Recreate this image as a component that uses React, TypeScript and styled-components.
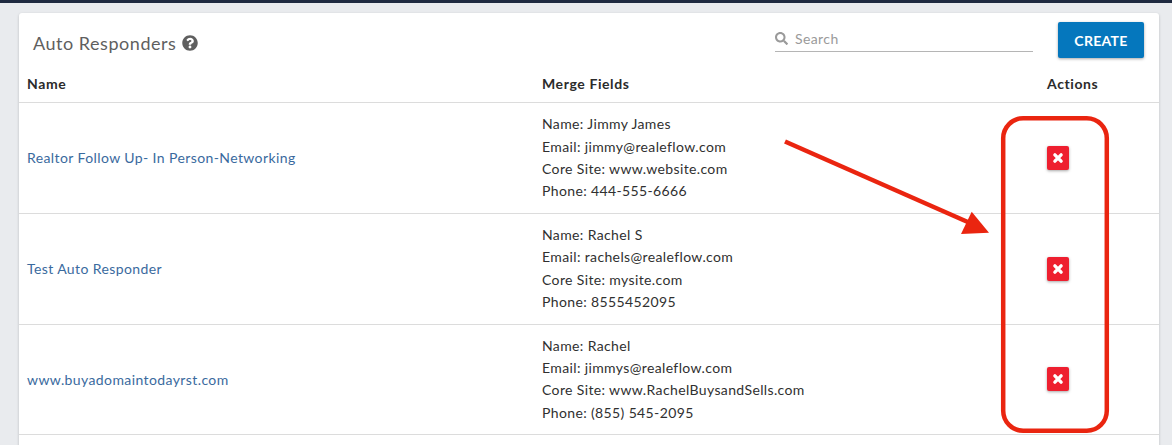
import styled, { createGlobalStyle } from "styled-components";
import { FaQuestionCircle, FaSearch } from "react-icons/fa";

type Responder = {
  id: string;
  title: string;
  fields: string[];
};

const responders: Responder[] = [
  {
    id: "realtor",
    title: "Realtor Follow Up- In Person-Networking",
    fields: [
      "Name: Jimmy James",
      "Email: jimmy@realeflow.com",
      "Core Site: www.website.com",
      "Phone: 444-555-6666",
    ],
  },
  {
    id: "test",
    title: "Test Auto Responder",
    fields: [
      "Name: Rachel S",
      "Email: rachels@realeflow.com",
      "Core Site: mysite.com",
      "Phone: 8555452095",
    ],
  },
  {
    id: "domain",
    title: "www.buyadomaintodayrst.com",
    fields: [
      "Name: Rachel",
      "Email: jimmys@realeflow.com",
      "Core Site: www.RachelBuysandSells.com",
      "Phone: (855) 545-2095",
    ],
  },
];

const GlobalStyle = createGlobalStyle`
  html,
  body {
    margin: 0;
    height: 100%;
    overflow: hidden;
    background: #e9ebee;
  }
  body {
    font-family: "Lato", "Liberation Sans", sans-serif;
    color: #2d2d2d;
  }
`;

const Page = styled.div`
  position: relative;
  height: 445px;
  overflow: hidden;
`;

const TopBar = styled.div`
  height: 3px;
  background: #1f2a40;
`;

const Card = styled.section`
  margin: 10px 13px 0 19px;
  background: #fff;
  border-radius: 3px 3px 0 0;
  box-shadow: 0 1px 3px rgba(0, 0, 0, 0.2);
  height: 440px;
`;

const CardHeader = styled.header`
  display: flex;
  align-items: flex-start;
  height: 54px;
  padding: 9px 15px 0 14px;
  box-sizing: border-box;
`;

const TitleWrap = styled.div`
  display: flex;
  align-items: center;
  gap: 6px;
  flex: 1;
  margin-top: 10px;
  color: #5f5f5f;
`;

const Title = styled.h1`
  margin: 0;
  font-size: 18px;
  font-weight: 400;
  line-height: 22px;
  letter-spacing: 0.53px;
  color: #5f5f5f;
`;

const SearchBox = styled.label`
  display: flex;
  align-items: center;
  gap: 7px;
  width: 258px;
  height: 29px;
  margin: 1px 25px 0 0;
  padding-top: 2px;
  border-bottom: 1px solid #b5b5b5;
  box-sizing: border-box;
  color: #9a9a9a;
`;

const SearchInput = styled.input`
  flex: 1;
  min-width: 0;
  border: 0;
  outline: 0;
  padding: 0;
  font: 400 14px "Lato", "Liberation Sans", sans-serif;
  letter-spacing: 0.4px;
  color: #2d2d2d;
  background: transparent;

  &::placeholder {
    color: #9a9a9a;
    opacity: 1;
  }
`;

const CreateButton = styled.button`
  width: 86px;
  height: 36px;
  border: 0;
  border-radius: 2px;
  background: #0577bd;
  box-shadow: 0 1px 3px rgba(0, 0, 0, 0.35);
  color: #fff;
  font: 700 14px "Lato", "Liberation Sans", sans-serif;
  letter-spacing: 0.3px;
`;

const Row = styled.div`
  display: grid;
  grid-template-columns: 515px 1fr 112px;
  padding-left: 8px;
  border-bottom: 1px solid #dcdcdc;
  align-items: center;
  box-sizing: border-box;
`;

const HeadRow = styled(Row)`
  height: 36px;
  padding-bottom: 2px;
  font-size: 14px;
  font-weight: 700;
  letter-spacing: 0.6px;
  color: #2b2b2b;
`;

const BodyRow = styled(Row)`
  height: 110.8px;
`;

const TitleLink = styled.a`
  font-size: 14px;
  letter-spacing: 0.4px;
  color: #3a6a9e;
  text-decoration: none;
`;

const Fields = styled.div`
  font-size: 14px;
  line-height: 22.2px;
  letter-spacing: 0.37px;
  color: #303030;
`;

const DeleteButton = styled.button`
  display: flex;
  align-items: center;
  justify-content: center;
  width: 22px;
  height: 24px;
  padding: 0;
  border: 0;
  border-radius: 2px;
  background: #ee1f2f;
  box-shadow: 0 1px 3px rgba(0, 0, 0, 0.35);
`;

const Annotation = styled.svg`
  position: absolute;
  left: 780px;
  top: 110px;
  pointer-events: none;
`;

export default function App() {
  return (
    <>
      <GlobalStyle />
      <Page>
        <TopBar />
        <Card>
          <CardHeader>
            <TitleWrap>
              <Title>Auto Responders</Title>
              <FaQuestionCircle size={16} />
            </TitleWrap>
            <SearchBox>
              <FaSearch size={13} />
              <SearchInput placeholder="Search" />
            </SearchBox>
            <CreateButton>CREATE</CreateButton>
          </CardHeader>
          <HeadRow>
            <div>Name</div>
            <div>Merge Fields</div>
            <div>Actions</div>
          </HeadRow>
          {responders.map((item) => (
            <BodyRow key={item.id}>
              <TitleLink>{item.title}</TitleLink>
              <Fields>
                {item.fields.map((line) => (
                  <div key={line}>{line}</div>
                ))}
              </Fields>
              <DeleteButton aria-label="Delete">
                <svg width="12" height="12" viewBox="0 0 12 12">
                  <path
                    d="M2.9 2.9 L9.1 9.1 M9.1 2.9 L2.9 9.1"
                    stroke="#fff"
                    strokeWidth="3.4"
                    strokeLinecap="round"
                  />
                </svg>
              </DeleteButton>
            </BodyRow>
          ))}
        </Card>
        <Annotation width="335" height="330" viewBox="0 0 335 330">
          <rect
            x="223.2"
            y="8.2"
            width="103.6"
            height="312.6"
            rx="20"
            fill="none"
            stroke="#ea2510"
            strokeWidth="4.5"
          />
          <path d="M5 31.5 L190 113" stroke="#ea2510" strokeWidth="4.5" fill="none" />
          <path d="M191.7 101.7 L209 122.7 L181 124 Z" fill="#ea2510" />
        </Annotation>
      </Page>
    </>
  );
}
